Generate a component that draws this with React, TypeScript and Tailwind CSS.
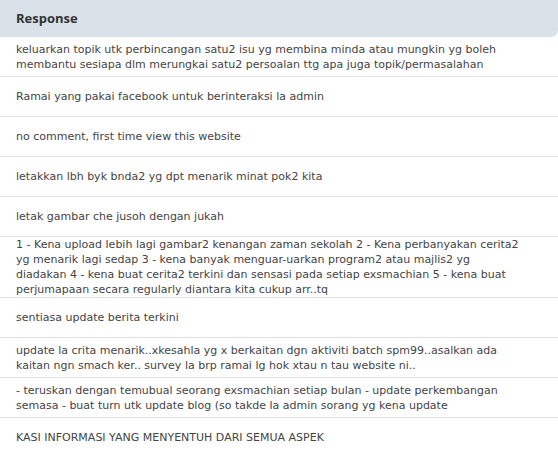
const responses: string[][] = [
  [
    "keluarkan topik utk perbincangan satu2 isu yg membina minda atau mungkin yg boleh",
    "membantu sesiapa dlm merungkai satu2 persoalan ttg apa juga topik/permasalahan",
  ],
  ["Ramai yang pakai facebook untuk berinteraksi la admin"],
  ["no comment, first time view this website"],
  ["letakkan lbh byk bnda2 yg dpt menarik minat pok2 kita"],
  ["letak gambar che jusoh dengan jukah"],
  [
    "1 - Kena upload lebih lagi gambar2 kenangan zaman sekolah 2 - Kena perbanyakan cerita2",
    "yg menarik lagi sedap 3 - kena banyak menguar-uarkan program2 atau majlis2 yg",
    "diadakan 4 - kena buat cerita2 terkini dan sensasi pada setiap exsmachian 5 - kena buat",
    "perjumapaan secara regularly diantara kita cukup arr..tq",
  ],
  ["sentiasa update berita terkini"],
  [
    "update la crita menarik..xkesahla yg x berkaitan dgn aktiviti batch spm99..asalkan ada",
    "kaitan ngn smach ker.. survey la brp ramai lg hok xtau n tau website ni..",
  ],
  [
    "- teruskan dengan temubual seorang exsmachian setiap bulan - update perkembangan",
    "semasa - buat turn utk update blog (so takde la admin sorang yg kena update",
  ],
  ["KASI INFORMASI YANG MENYENTUH DARI SEMUA ASPEK"],
];

export default function App() {
  return (
    <div className="w-[558px] h-[457px] overflow-hidden bg-white">
      <div className="h-[37px] bg-[#d8e2e8] rounded-br-[7px] flex items-center pl-4">
        <span className="text-[13px] font-bold text-[#333] [font-family:'Open_Sans',sans-serif]">
          Response
        </span>
      </div>
      {responses.map((lines, i) => (
        <div
          key={i}
          className="min-h-[40px] border-b border-[#e2e2e2] flex items-center pl-4 pr-2 text-[11px] leading-[15px] text-[#444] [font-family:'DejaVu_Sans',Verdana,sans-serif] whitespace-nowrap"
        >
          <div>
            {lines.map((l, j) => (
              <div key={j}>{l}</div>
            ))}
          </div>
        </div>
      ))}
    </div>
  );
}
